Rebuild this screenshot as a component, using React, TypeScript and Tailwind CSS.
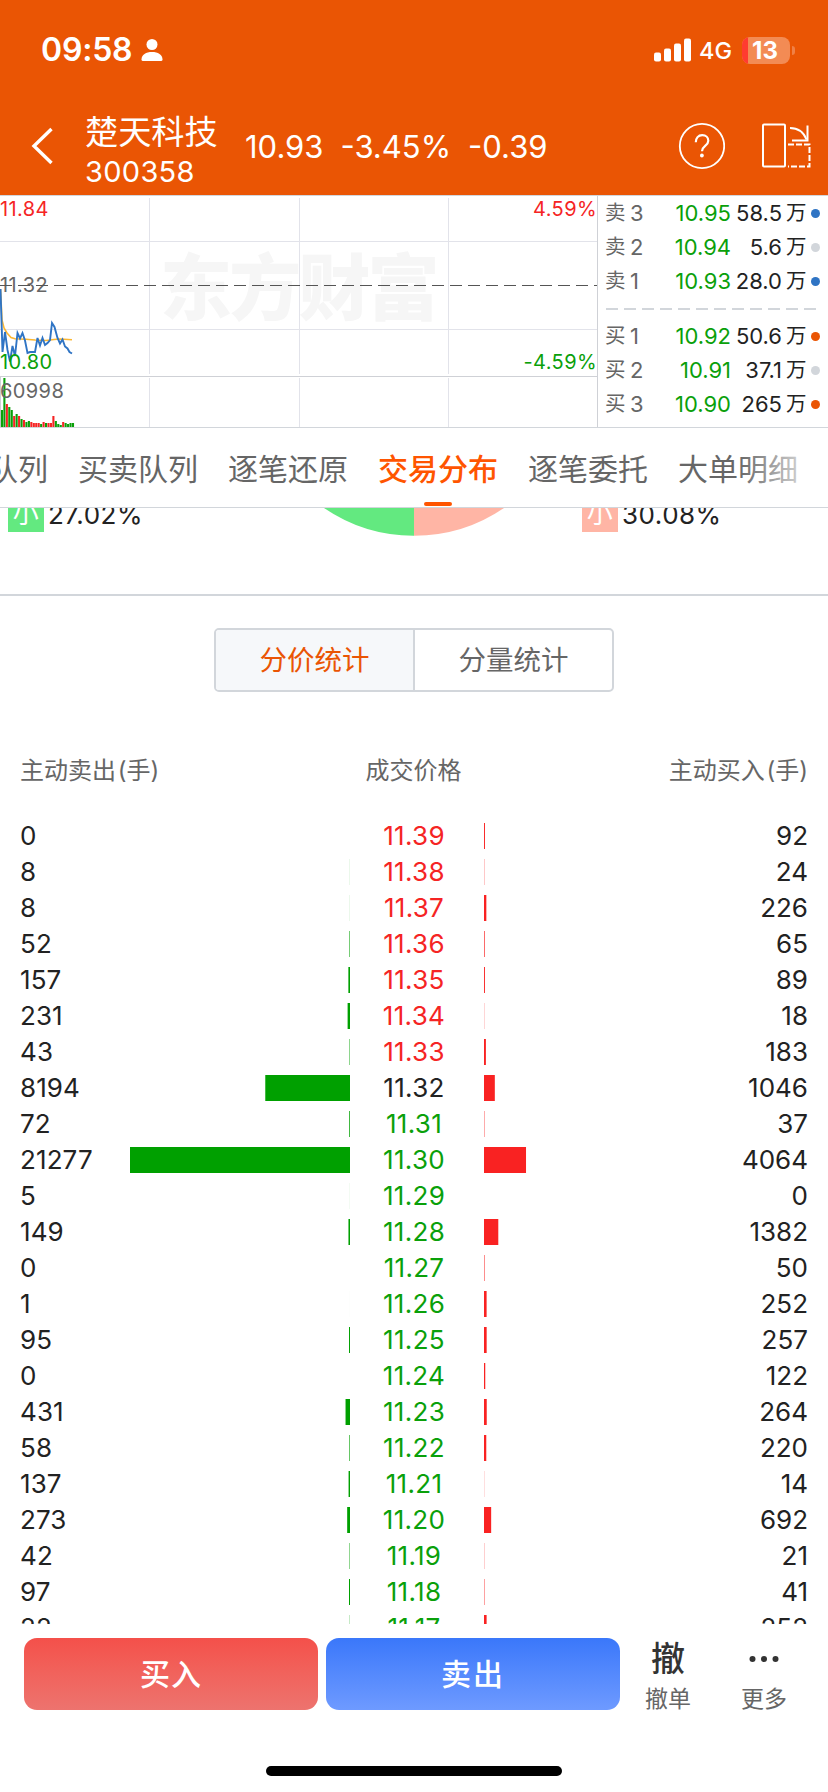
import React from 'react';

interface Level {
  price: string;
  sell: number;
  buy: number;
}

interface Quote {
  side: string;
  level: number;
  price: string;
  volume: string;
  dot: string;
}

const PREV_CLOSE = 11.32;
const MAX_VOLUME = 21277;
const MAX_BAR = 220;

const LEVELS: Level[] = [
  { price: '11.39', sell: 0, buy: 92 },
  { price: '11.38', sell: 8, buy: 24 },
  { price: '11.37', sell: 8, buy: 226 },
  { price: '11.36', sell: 52, buy: 65 },
  { price: '11.35', sell: 157, buy: 89 },
  { price: '11.34', sell: 231, buy: 18 },
  { price: '11.33', sell: 43, buy: 183 },
  { price: '11.32', sell: 8194, buy: 1046 },
  { price: '11.31', sell: 72, buy: 37 },
  { price: '11.30', sell: 21277, buy: 4064 },
  { price: '11.29', sell: 5, buy: 0 },
  { price: '11.28', sell: 149, buy: 1382 },
  { price: '11.27', sell: 0, buy: 50 },
  { price: '11.26', sell: 1, buy: 252 },
  { price: '11.25', sell: 95, buy: 257 },
  { price: '11.24', sell: 0, buy: 122 },
  { price: '11.23', sell: 431, buy: 264 },
  { price: '11.22', sell: 58, buy: 220 },
  { price: '11.21', sell: 137, buy: 14 },
  { price: '11.20', sell: 273, buy: 692 },
  { price: '11.19', sell: 42, buy: 21 },
  { price: '11.18', sell: 97, buy: 41 },
  { price: '11.17', sell: 22, buy: 252 },
];

const ASKS: Quote[] = [
  { side: '卖', level: 3, price: '10.95', volume: '58.5', dot: 'bg-[#2f74c4]' },
  { side: '卖', level: 2, price: '10.94', volume: '5.6', dot: 'bg-[#d2d6db]' },
  { side: '卖', level: 1, price: '10.93', volume: '28.0', dot: 'bg-[#2f74c4]' },
];

const BIDS: Quote[] = [
  { side: '买', level: 1, price: '10.92', volume: '50.6', dot: 'bg-[#ea5504]' },
  { side: '买', level: 2, price: '10.91', volume: '37.1', dot: 'bg-[#d2d6db]' },
  { side: '买', level: 3, price: '10.90', volume: '265', dot: 'bg-[#ea5504]' },
];

const TABS = ['买卖队列', '逐笔还原', '交易分布', '逐笔委托', '大单明细'];

// height and direction of each minute's volume, 2.5px apart
const VOLUMES: [number, 'u' | 'd'][] = [
  [17, 'd'], [49, 'd'], [23, 'u'], [20, 'd'], [17, 'd'], [11, 'u'], [13, 'd'], [11, 'u'], [8, 'd'], [7, 'u'],
  [5, 'd'], [6, 'd'], [5, 'u'], [4, 'u'], [4, 'u'], [4, 'u'], [3, 'd'], [5, 'u'], [4, 'd'], [4, 'u'],
  [4, 'u'], [11, 'u'], [6, 'd'], [3, 'd'], [2, 'd'], [5, 'u'], [4, 'd'], [3, 'd'], [4, 'd'], [4, 'd'],
];

const StatusBar = () => (
  <div className="flex h-[100px] items-center justify-between pl-[41px] pr-[33px]">
    <div className="flex items-center gap-[9px]">
      <span className="text-[32px] font-semibold leading-none tracking-[-0.2px]">09:58</span>
      <svg width="22" height="24" viewBox="0 0 22 24" fill="#fff">
        <circle cx="11" cy="6.5" r="5.5" />
        <path d="M0.5 21.5C0.5 16.5 5 14 11 14S21.5 16.5 21.5 21.5Q21.5 23 20 23H2Q0.5 23 0.5 21.5Z" />
      </svg>
    </div>
    <div className="flex items-center">
      <svg width="38" height="24" viewBox="0 0 38 24" fill="#fff">
        <rect x="0" y="14.5" width="7" height="9" rx="2" />
        <rect x="10" y="10.5" width="7" height="13" rx="2" />
        <rect x="20" y="5.5" width="7" height="18" rx="2" />
        <rect x="30" y="0.5" width="7" height="23" rx="2" />
      </svg>
      <span className="ml-[7px] w-[43px] pt-[2px] text-[23.5px] font-medium leading-none">4G</span>
      <div className="relative flex h-[27px] w-[48px] justify-center overflow-hidden rounded-[8px] bg-[#f38b54]">
        <div className="absolute left-0 top-0 h-full w-[6px] bg-[#ff3b30]" />
        <span className="relative -ml-[2px] text-[24px] font-bold leading-[27px]">13</span>
      </div>
      <div className="ml-[2px] h-[9px] w-[3px] rounded-r-full bg-[#f08046]" />
    </div>
  </div>
);

const Header = () => (
  <div className="flex h-[92px] items-center">
    <svg className="ml-[31px] shrink-0" width="22" height="38" viewBox="0 0 22 38" fill="none" stroke="#fff" strokeWidth="3.4">
      <path d="M20.5 2L3 19L20.5 36" />
    </svg>
    <div className="ml-[32px] w-[160px] shrink-0 pt-[13px]">
      <div className="text-[33.2px] leading-[39px]">楚天科技</div>
      <div className="text-[29px] leading-[40px] tracking-[0.3px]">300358</div>
    </div>
    <div className="flex w-[432px] shrink-0 gap-[17px] text-[31px] leading-none">
      <span>10.93</span>
      <span>-3.45%</span>
      <span>-0.39</span>
    </div>
    <svg className="shrink-0" width="48" height="48" viewBox="0 0 48 48" fill="none" stroke="#fff">
      <circle cx="25" cy="24" r="22.2" strokeWidth="1.8" />
      <path d="M18.8 20.2C18.8 16 21.3 13.2 25.2 13.2C29 13.2 31.3 15.6 31.3 18.7C31.3 24 25 23.8 25 29.2" strokeWidth="2.2" />
      <circle cx="24.9" cy="33.5" r="1.9" fill="#fff" stroke="none" />
    </svg>
    <svg className="ml-[37px] shrink-0" width="50" height="46" viewBox="0 0 50 46" fill="none" stroke="#fff" strokeWidth="2">
      <rect x="1" y="1.5" width="22" height="42" rx="1" />
      <path d="M28 5Q40 5 44.5 16.5" />
      <path d="M45.5 2.5V17.5H30" />
      <path d="M26 21.5H47.5V43.5H26" strokeDasharray="6 2" />
    </svg>
  </div>
);

const MinuteChart = () => (
  <svg
    className="shrink-0 text-[20px] tracking-[0.4px]"
    width="598"
    height="232"
    viewBox="0 0 598 232"
    fontFamily='Inter, "Noto Sans CJK SC", sans-serif'
  >
    <text x="160" y="118" fontSize="72" fontWeight="900" fill="#f6f6f6" textLength="280">东方财富</text>
    <g stroke="#e2e3ea" strokeWidth="1">
      <path d="M0 45.5H597M0 133.5H597" />
      <path d="M149.5 2V178M299.5 2V178M448.5 2V178" />
      <path d="M149.5 182V231M299.5 182V231M448.5 182V231" />
    </g>
    <path d="M0 180.5H597M597.5 0V231M0.5 180V231" stroke="#cfd1d6" />
    <text x="0" y="96" fill="#666">11.32</text>
    <path d="M0 89.5H597" stroke="#555" strokeDasharray="12 6" />
    <path d="M0.5 93L2 124L4 132L7 137L11 141.5L15 142.7L20 143L26 143.3L35 144L46 144.5L54 143.5L60 143L72 143.8" fill="none" stroke="#fbb733" strokeWidth="1.6" />
    <path
      d="M0.5 93L2.5 156L5 136L7.5 154L10 165.5L12.5 150L15 160L17.5 137L20 142.5L22.5 137L25 144.5L27.5 157L30 156L35 156L37.5 142L40 149.5L42.5 142L45 149L47.5 147L50 144L52 127L54.5 131L57.5 142L60 147.5L62.5 143.5L65 150.5L67.5 152.5L69.5 156L72 157.5"
      fill="none"
      stroke="#2f74c4"
      strokeWidth="1.9"
    />
    {VOLUMES.map(([h, dir], i) => (
      <rect key={i} x={0.9 + i * 2.45} y={231 - h} width="2.1" height={h} fill={dir === 'u' ? '#f52424' : '#0aa00a'} />
    ))}
    <text x="0" y="20" fill="#f52424">11.84</text>
    <text x="597" y="20" textAnchor="end" fill="#f52424">4.59%</text>
    <text x="0" y="173" fill="#0aa00a">10.80</text>
    <text x="597" y="173" textAnchor="end" fill="#0aa00a">-4.59%</text>
    <text x="0" y="202" fill="#666">60998</text>
  </svg>
);

const QuoteRow = ({ quote }: { quote: Quote }) => (
  <div className="flex h-[34px] items-center text-[22px] leading-none">
    <span className="w-[25px] text-[20.5px] text-[#666]">{quote.side}</span>
    <span className="w-[20px] text-[#666]">{quote.level}</span>
    <span className="w-[81px] text-right text-[#0aa00a]">{quote.price}</span>
    <span className="w-[51px] text-right text-[#222]">{quote.volume}</span>
    <span className="ml-[4px] w-[21px] text-[20.5px] text-[#222]">万</span>
    <span className={`ml-[4px] h-[9px] w-[9px] rounded-full ${quote.dot}`} />
  </div>
);

const OrderBook = () => (
  <div className="flex-1 pl-[7px]">
    {ASKS.map(q => <QuoteRow key={q.level} quote={q} />)}
    <svg className="mb-[9px] mt-[10px] block" width="212" height="2">
      <path d="M1 1H212" stroke="#d2d6db" strokeWidth="2" strokeDasharray="12 6" />
    </svg>
    {BIDS.map(q => <QuoteRow key={q.level} quote={q} />)}
  </div>
);

const TabBar = () => (
  <div className="relative flex h-[80px] shrink-0 overflow-hidden border-b border-[#d2d6db]">
    <div className="-ml-[72px] flex gap-[30px] whitespace-nowrap text-[30px] leading-[82px] text-[#666]">
      <span>委托队列</span>
      {TABS.map(tab =>
        tab === '交易分布' ? (
          <span key={tab} className="relative font-medium text-[#ff5500]">
            {tab}
            <span className="absolute bottom-[1px] left-[46px] h-[4px] w-[28px] rounded-full bg-[#ff5500]" />
          </span>
        ) : (
          <span key={tab}>{tab}</span>
        )
      )}
    </div>
    <div className="absolute right-0 top-0 h-full w-[90px] bg-gradient-to-r from-white/0 via-white/60 via-60% to-white" />
  </div>
);

const ShareSummary = () => (
  <div className="relative flex h-[88px] shrink-0 overflow-hidden border-b-2 border-[#d2d6db] text-[26px] tracking-[0.5px] text-[#222]">
    <div className="-mt-[12px] ml-[8px] flex h-[36px] w-[574px] items-center gap-[4px]">
      <span className="h-[36px] w-[36px] bg-[#63e980] text-center leading-[35px] text-white">小</span>
      <span>27.02%</span>
    </div>
    <div className="-mt-[12px] flex h-[36px] items-center gap-[4px]">
      <span className="h-[36px] w-[36px] bg-[#ffb5a5] text-center leading-[35px] text-white">小</span>
      <span>30.08%</span>
    </div>
    <svg className="absolute left-[314px] top-0" width="200" height="30" viewBox="0 0 200 30">
      <path d="M100 -20V27.7A159 159 0 0 1 10 0V-20Z" fill="#63e980" />
      <path d="M100 -20V27.7A159 159 0 0 0 190 0V-20Z" fill="#ffb5a5" />
    </svg>
  </div>
);

const priceColor = (price: string) => {
  const p = Number(price);
  if (p > PREV_CLOSE) return 'text-[#f52424]';
  if (p < PREV_CLOSE) return 'text-[#0aa00a]';
  return 'text-[#222]';
};

const LevelRow = ({ level }: { level: Level }) => {
  const sellWidth = (level.sell / MAX_VOLUME) * MAX_BAR;
  const buyWidth = (level.buy / MAX_VOLUME) * MAX_BAR;
  return (
    <div className="flex h-[36px] shrink-0 items-center text-[26px] leading-[36px]">
      <div className="flex w-[350px] items-center justify-between pl-[20px]">
        <span className="tracking-[0.1px] text-[#222]">{level.sell}</span>
        <svg width={MAX_BAR} height="26">
          <rect x={MAX_BAR - sellWidth} width={sellWidth} height="26" fill="#00a000" />
        </svg>
      </div>
      <div className={`w-[134px] pr-[6px] text-center tracking-[0.3px] ${priceColor(level.price)}`}>{level.price}</div>
      <div className="flex flex-1 items-center justify-between pr-[20px]">
        <svg width={MAX_BAR} height="26">
          <rect width={buyWidth} height="26" fill="#f92222" />
        </svg>
        <span className="text-[#222]">{level.buy}</span>
      </div>
    </div>
  );
};

const PriceStats = () => (
  <div className="flex h-[1028px] shrink-0 flex-col overflow-hidden">
    <div className="mx-auto mt-[32px] flex h-[64px] w-[400px] shrink-0 overflow-hidden rounded-[5px] border-2 border-[#d2d6db] text-[27.5px] leading-[61px]">
      <div className="w-[199px] border-r-2 border-[#d2d6db] bg-[#f6f8fa] text-center text-[#ea5504]">分价统计</div>
      <div className="flex-1 text-center text-[#666]">分量统计</div>
    </div>
    <div className="mb-[29px] mt-[60px] flex h-[37px] shrink-0 items-center text-[24px] text-[#666]">
      <span className="w-[350px] pl-[20px] [word-spacing:-5px]">主动卖出 (手)</span>
      <span className="w-[134px] pr-[7px] text-center">成交价格</span>
      <span className="flex-1 pr-[20px] text-right [word-spacing:-5px]">主动买入 (手)</span>
    </div>
    {LEVELS.map(level => <LevelRow key={level.price} level={level} />)}
  </div>
);

const TradeBar = () => (
  <div className="flex flex-1 flex-col justify-between pb-[16px] pt-[14px]">
    <div className="flex h-[72px] pl-[24px] text-[30px] font-medium leading-[72px] text-white">
      <button className="w-[294px] rounded-[13px] bg-gradient-to-b from-[#f4504a] to-[#ed736e] tracking-[1px]">买入</button>
      <button className="ml-[8px] w-[294px] rounded-[13px] bg-gradient-to-b from-[#3a77fa] to-[#6e9aff] tracking-[2px]">卖出</button>
      <div className="flex w-[96px] flex-col items-center text-[#333]">
        <span className="h-[42px] shrink-0 text-[34px] leading-[42px]">撤</span>
        <span className="text-[23px] font-normal leading-[38px] text-[#666]">撤单</span>
      </div>
      <div className="flex w-[96px] flex-col items-center">
        <svg className="shrink-0" width="30" height="42" viewBox="0 0 30 42" fill="#333">
          <circle cx="3.5" cy="21" r="3" />
          <circle cx="15" cy="21" r="3" />
          <circle cx="26.5" cy="21" r="3" />
        </svg>
        <span className="text-[23px] font-normal leading-[38px] text-[#666]">更多</span>
      </div>
    </div>
    <div className="mx-auto h-[10px] w-[296px] rounded-full bg-black" />
  </div>
);

const App: React.FC = () => (
  <div className="flex h-[1792px] w-[828px] flex-col overflow-hidden bg-white font-[Inter,'Noto_Sans_CJK_SC',sans-serif]">
    <div className="h-[195px] shrink-0 bg-[#ea5504] text-white">
      <StatusBar />
      <Header />
    </div>
    <div className="flex h-[233px] shrink-0 border-y border-[#d2d6db]">
      <MinuteChart />
      <OrderBook />
    </div>
    <TabBar />
    <ShareSummary />
    <PriceStats />
    <TradeBar />
  </div>
);

export default App;
